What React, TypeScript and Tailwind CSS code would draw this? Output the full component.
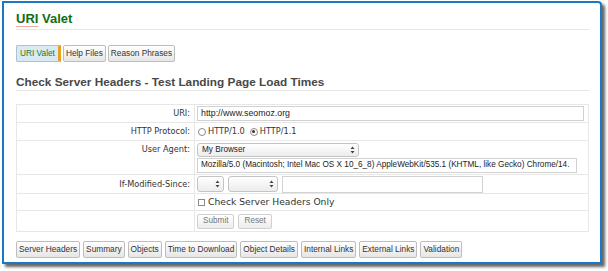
import React from 'react';

const label = "font-['DejaVu_Sans',sans-serif] text-[8.2px] text-[#333]";
const field = "font-['Liberation_Sans',Arial,sans-serif] text-[8.2px] text-[#222]";

function Btn({ children, active }: { children: React.ReactNode; active?: boolean }) {
  if (active) {
    return (
      <span className="flex h-[17px] items-center border border-[#a9c3d3] border-r-[3px] border-r-[#e8a024] bg-[#d9eaf4] px-[3px] text-[8.3px] text-[#1d7a1d] rounded-l-[2px]">
        {children}
      </span>
    );
  }
  return (
    <span className="flex h-[17px] items-center rounded-[2px] border border-[#bdbdbd] bg-gradient-to-b from-white to-[#e6e6e6] px-[2px] text-[8.3px] text-[#333]">
      {children}
    </span>
  );
}

function Arrows() {
  return (
    <svg width="5" height="8" viewBox="0 0 5 8" className="shrink-0">
      <path d="M2.5 0.5 L4.5 3 L0.5 3 Z M2.5 7.5 L4.5 5 L0.5 5 Z" fill="#444" />
    </svg>
  );
}

function Select({ w, text }: { w: string; text?: string }) {
  return (
    <div className={`${w} flex items-center justify-between rounded-[3px] border border-[#c4c4c4] bg-gradient-to-b from-white to-[#ececec] pl-[4px] pr-[3px]`}>
      <span className={field}>{text}</span>
      <Arrows />
    </div>
  );
}

function Radio({ checked }: { checked?: boolean }) {
  return (
    <span className="flex h-[8px] w-[8px] items-center justify-center rounded-full border border-[#8a8a8a] bg-white">
      {checked && <span className="h-[3px] w-[3px] rounded-full bg-[#333]" />}
    </span>
  );
}

export default function App() {
  const rowCls = "flex border-b border-[#e7e7e7]";
  const labelCell = `w-[178px] shrink-0 border-r border-[#e7e7e7] pr-[4px] text-right ${label}`;
  const formBtn = `flex h-[15px] items-center rounded-[2px] border border-[#d0d0d0] bg-gradient-to-b from-white to-[#ececec] px-[5px] ${field} text-[#777]`;

  return (
    <div className="h-[271px] w-[608px] bg-white pl-[2px] pt-[1px] font-['Liberation_Sans',Arial,sans-serif]">
      <div className="h-[263px] w-[600px] rounded-tr-[4px] border-2 border-[#1c78c3] bg-white pl-[12px] pr-[11px] shadow-[3px_3px_3px_rgba(0,0,0,0.6)]">
        <h1 className="border-b border-[#e6e6e6] pb-[2px] pt-[8px] text-[13px] font-bold leading-[16px] text-[#0f6e14]">
          <span className="underline decoration-[#f0a6a6] decoration-1 underline-offset-[3px]">URI</span> Valet
        </h1>

        <div className="mt-[15px] flex gap-[2px]">
          <Btn active>URI Valet</Btn>
          <Btn>Help Files</Btn>
          <Btn>Reason Phrases</Btn>
        </div>

        <h2 className="mt-[13px] border-b border-[#e6e6e6] pb-[1px] text-[11.8px] font-bold leading-[14px] text-[#484848]">
          Check Server Headers - Test Landing Page Load Times
        </h2>

        <div className="mt-[13px] border border-[#e7e7e7]">
          <div className={`${rowCls} h-[18px]`}>
            <div className={`${labelCell} leading-[17px]`}>URI:</div>
            <div className="flex flex-1 items-center pl-[2px] pr-[4px]">
              <div className={`flex h-[15px] w-full items-center border border-[#d2d2d2] pl-[3px] ${field} text-[8.8px]`}>
                http://www.seomoz.org
              </div>
            </div>
          </div>

          <div className={`${rowCls} h-[18px]`}>
            <div className={`${labelCell} leading-[17px]`}>HTTP Protocol:</div>
            <div className={`flex flex-1 items-center gap-[2px] pl-[3px] ${label}`}>
              <Radio />
              <span>HTTP/1.0</span>
              <span className="w-[1px]" />
              <Radio checked />
              <span>HTTP/1.1</span>
            </div>
          </div>

          <div className={`${rowCls} h-[34px]`}>
            <div className={`${labelCell} pt-[3px] leading-[10px]`}>User Agent:</div>
            <div className="flex flex-1 flex-col gap-[1px] pl-[2px] pt-[2px]">
              <Select w="w-[162px] h-[14px]" text="My Browser" />
              <div className={`flex h-[15px] w-[380px] items-center border border-[#d2d2d2] pl-[3px] ${field}`}>
                Mozilla/5.0 (Macintosh; Intel Mac OS X 10_6_8) AppleWebKit/535.1 (KHTML, like Gecko) Chrome/14.
              </div>
            </div>
          </div>

          <div className={`${rowCls} h-[19px]`}>
            <div className={`${labelCell} leading-[18px]`}>If-Modified-Since:</div>
            <div className="flex flex-1 items-center gap-[4px] pl-[2px]">
              <Select w="w-[27px] h-[16px]" />
              <Select w="w-[50px] h-[16px]" />
              <div className="h-[17px] w-[201px] border border-[#d2d2d2]" />
            </div>
          </div>

          <div className={`${rowCls} h-[17px]`}>
            <div className={labelCell} />
            <div className="flex flex-1 items-center gap-[3px] pl-[3px] font-['DejaVu_Sans',sans-serif] text-[9.2px] text-[#333]">
              <span className="h-[7px] w-[7px] border border-[#8a8a8a] bg-white" />
              <span>Check Server Headers Only</span>
            </div>
          </div>

          <div className="flex h-[20px]">
            <div className={labelCell} />
            <div className="flex flex-1 items-center gap-[4px] pl-[2px]">
              <span className={formBtn}>Submit</span>
              <span className={formBtn}>Reset</span>
            </div>
          </div>
        </div>

        <div className="mt-[9px] flex gap-[3px]">
          <Btn>Server Headers</Btn>
          <Btn>Summary</Btn>
          <Btn>Objects</Btn>
          <Btn>Time to Download</Btn>
          <Btn>Object Details</Btn>
          <Btn>Internal Links</Btn>
          <Btn>External Links</Btn>
          <Btn>Validation</Btn>
        </div>
      </div>
    </div>
  );
}
